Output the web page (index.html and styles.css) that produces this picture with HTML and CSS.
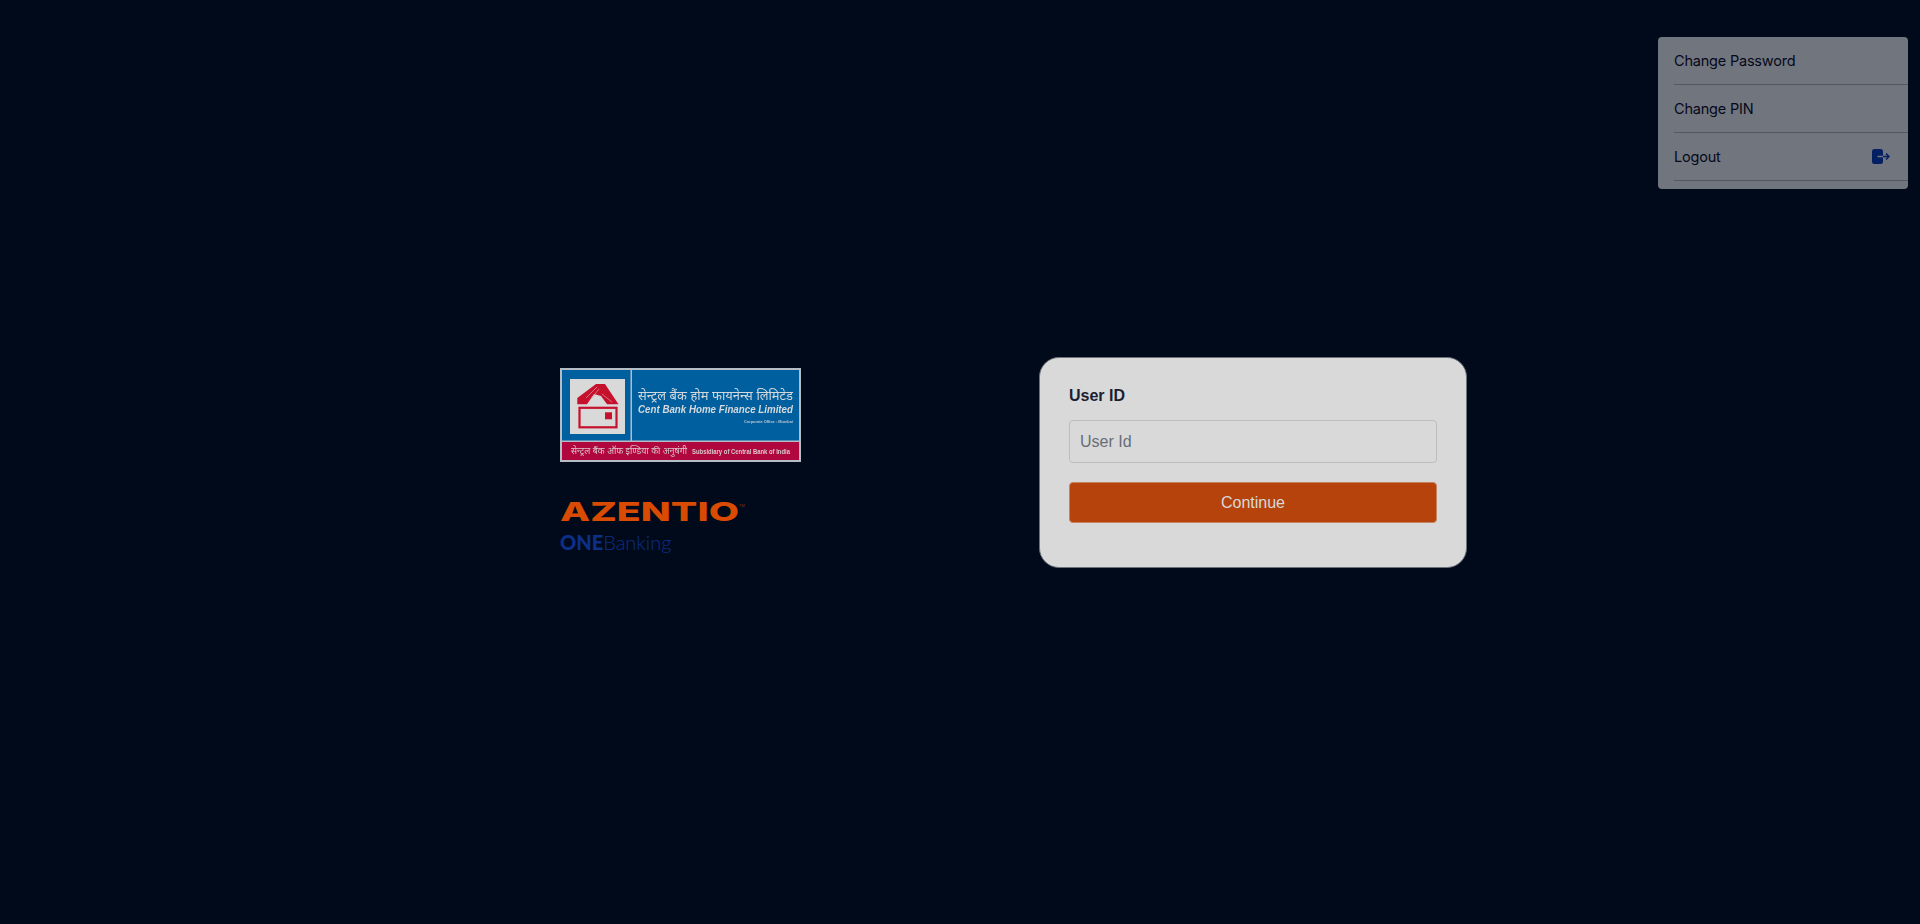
FILE: index.html
```html
<!DOCTYPE html>
<html lang="en">
<head>
    <meta charset="UTF-8">
    <meta name="viewport" content="width=device-width, initial-scale=1.0">
    <title>Login</title>
    <link rel="stylesheet" href="styles.css">
</head>
<body>
    <div class="login-row">
        <div class="brand">
            <svg class="bank-logo" width="241" height="94" viewBox="0 0 241 94">
                <rect width="241" height="94" fill="#b4bcc6"/>
                <rect x="2" y="2" width="68.5" height="70.5" fill="#00609f"/>
                <rect x="72" y="2" width="167" height="70.5" fill="#00609f"/>
                <rect x="2" y="74" width="237" height="18" fill="#b0073f"/>
                <rect x="10" y="11" width="55" height="55" fill="#d9d9d9"/>
                <path d="M17.3 30 L36 16 H45 L58.5 36.3 H47 L41 28 L34 26 L27 36.3 H17.3 Z" fill="#c5112b"/>
                <path d="M26 30 L37 19 M31 31 L39 21 M42 26 L52 34" stroke="#e39aa4" stroke-width="0.7" fill="none"/>
                <rect x="19.5" y="39.8" width="37" height="19.5" fill="none" stroke="#c5112b" stroke-width="2.2"/>
                <rect x="45" y="44.3" width="7" height="7" fill="#c5112b"/>
                <text class="logo-hi" x="78" y="32" textLength="155" lengthAdjust="spacingAndGlyphs">सेन्ट्रल बैंक होम फायनेन्स लिमिटेड</text>
                <text class="logo-en" x="78" y="45" textLength="155" lengthAdjust="spacingAndGlyphs">Cent Bank Home Finance Limited</text>
                <text class="logo-tiny" x="184" y="55" textLength="49" lengthAdjust="spacingAndGlyphs">Corporate Office : Mumbai</text>
                <text class="logo-band-hi" x="11" y="86" textLength="116" lengthAdjust="spacingAndGlyphs">सेन्ट्रल बैंक ऑफ इण्डिया की अनुषंगी</text>
                <text class="logo-band" x="132" y="85.5" textLength="98" lengthAdjust="spacingAndGlyphs">Subsidiary of Central Bank of India</text>
            </svg>
            <svg class="azentio" width="190" height="24" viewBox="0 0 190 24">
                <text class="azentio-word" x="0" y="21" textLength="179" lengthAdjust="spacingAndGlyphs">AZENTIO</text>
                <text class="azentio-tm" x="179" y="7">TM</text>
            </svg>
            <div class="product"><b>ONE</b>Banking</div>
        </div>

        <form class="card">
            <label class="field-label" for="userId">User ID</label>
            <input class="field-input" id="userId" type="text" placeholder="User Id">
            <button class="continue-btn" type="button">Continue</button>
        </form>
    </div>

    <!-- user menu, sits over the page -->
    <div class="user-menu">
        <div class="menu-item">Change Password</div>
        <div class="menu-item">Change PIN</div>
        <div class="menu-item">
            Logout
            <svg class="logout-icon" width="18" height="15" viewBox="0 0 18 15">
                <rect width="11" height="15" rx="2.5" fill="#051f63"/>
                <path d="M5.5 7.5 H11" stroke="#71757e" stroke-width="1.5"/>
                <path d="M11 7.5 H17 M14 4.5 L17 7.5 L14 10.5" fill="none" stroke="#051f63" stroke-width="1.5"/>
            </svg>
        </div>
    </div>
</body>
</html>
```

FILE: styles.css
```css
/* page */
body {
    margin: 0;
    height: 924px;
    overflow: hidden;
    background: #010a1b;
    font-family: "Liberation Sans", Arial, sans-serif;
}

.login-row {
    display: flex;
    align-items: center;
    height: 100%;
    padding-left: 560px;
    gap: 238px;
}

/* left column with the logos */
.brand {
    width: 241px;
    padding-bottom: 1px;
    display: flex;
    flex-direction: column;
    align-items: flex-start;
}

.bank-logo {
    display: block;
    filter: blur(0.3px);
}

.bank-logo text {
    font-family: "Liberation Sans", "Noto Sans", sans-serif;
}

.logo-hi {
    font-size: 13px;
    fill: #d5d9de;
}

.logo-en {
    font-size: 10.5px;
    font-weight: bold;
    font-style: italic;
    fill: #d5d9de;
}

.logo-tiny {
    font-size: 3.6px;
    font-weight: bold;
    fill: #b9c4d0;
}

.logo-band-hi {
    font-size: 9.5px;
    fill: #d9c9cf;
}

.logo-band {
    font-size: 6.6px;
    font-weight: bold;
    fill: #d9c9cf;
}

.azentio {
    display: block;
    margin-top: 38px;
}

.azentio-word {
    font-family: Inter, sans-serif;
    font-weight: 800;
    font-size: 26px;
    fill: #d94a02;
}

.azentio-tm {
    font-family: "Liberation Sans", sans-serif;
    font-size: 4px;
    fill: #7d3a14;
}

.product {
    margin-top: 5px;
    font-family: Lato, sans-serif;
    font-size: 20px;
    line-height: 26px;
    font-weight: 300;
    color: #0c2f8a;
}

.product b {
    font-weight: 900;
}

/* login card */
.card {
    box-sizing: border-box;
    width: 428px;
    height: 211px;
    margin-top: 1px;
    padding: 29px;
    background: #d9d9d9;
    border: 1px solid #6d7279;
    border-radius: 20px;
    display: flex;
    flex-direction: column;
}

.field-label {
    font-size: 16px;
    line-height: 18px;
    font-weight: bold;
    color: #1b1e33;
    margin-bottom: 15px;
}

.field-input {
    box-sizing: border-box;
    height: 43px;
    padding: 0 10px;
    margin-bottom: 19px;
    background: #d9d9d9;
    border: 1px solid #bdbdbd;
    border-radius: 4px;
    font-family: inherit;
    font-size: 16px;
    outline: none;
}

.field-input::placeholder {
    color: #676d75;
    opacity: 1;
}

.continue-btn {
    height: 41px;
    border: 1px solid #c7825f;
    border-radius: 4px;
    background: #b5430b;
    color: #d9d9d9;
    font-family: inherit;
    font-size: 16px;
}

/* dropdown top right */
.user-menu {
    position: absolute;
    top: 37px;
    right: 12px;
    box-sizing: border-box;
    width: 250px;
    height: 152px;
    padding-left: 16px;
    background: #71757e;
    border-radius: 4px;
    font-family: Inter, sans-serif;
    font-size: 14.5px;
    letter-spacing: -0.2px;
    color: #05091a;
}

.menu-item {
    box-sizing: border-box;
    height: 48px;
    padding-right: 18px;
    display: flex;
    align-items: center;
    justify-content: space-between;
    border-bottom: 1px solid #535867;
}

.logout-icon {
    display: block;
}
```
